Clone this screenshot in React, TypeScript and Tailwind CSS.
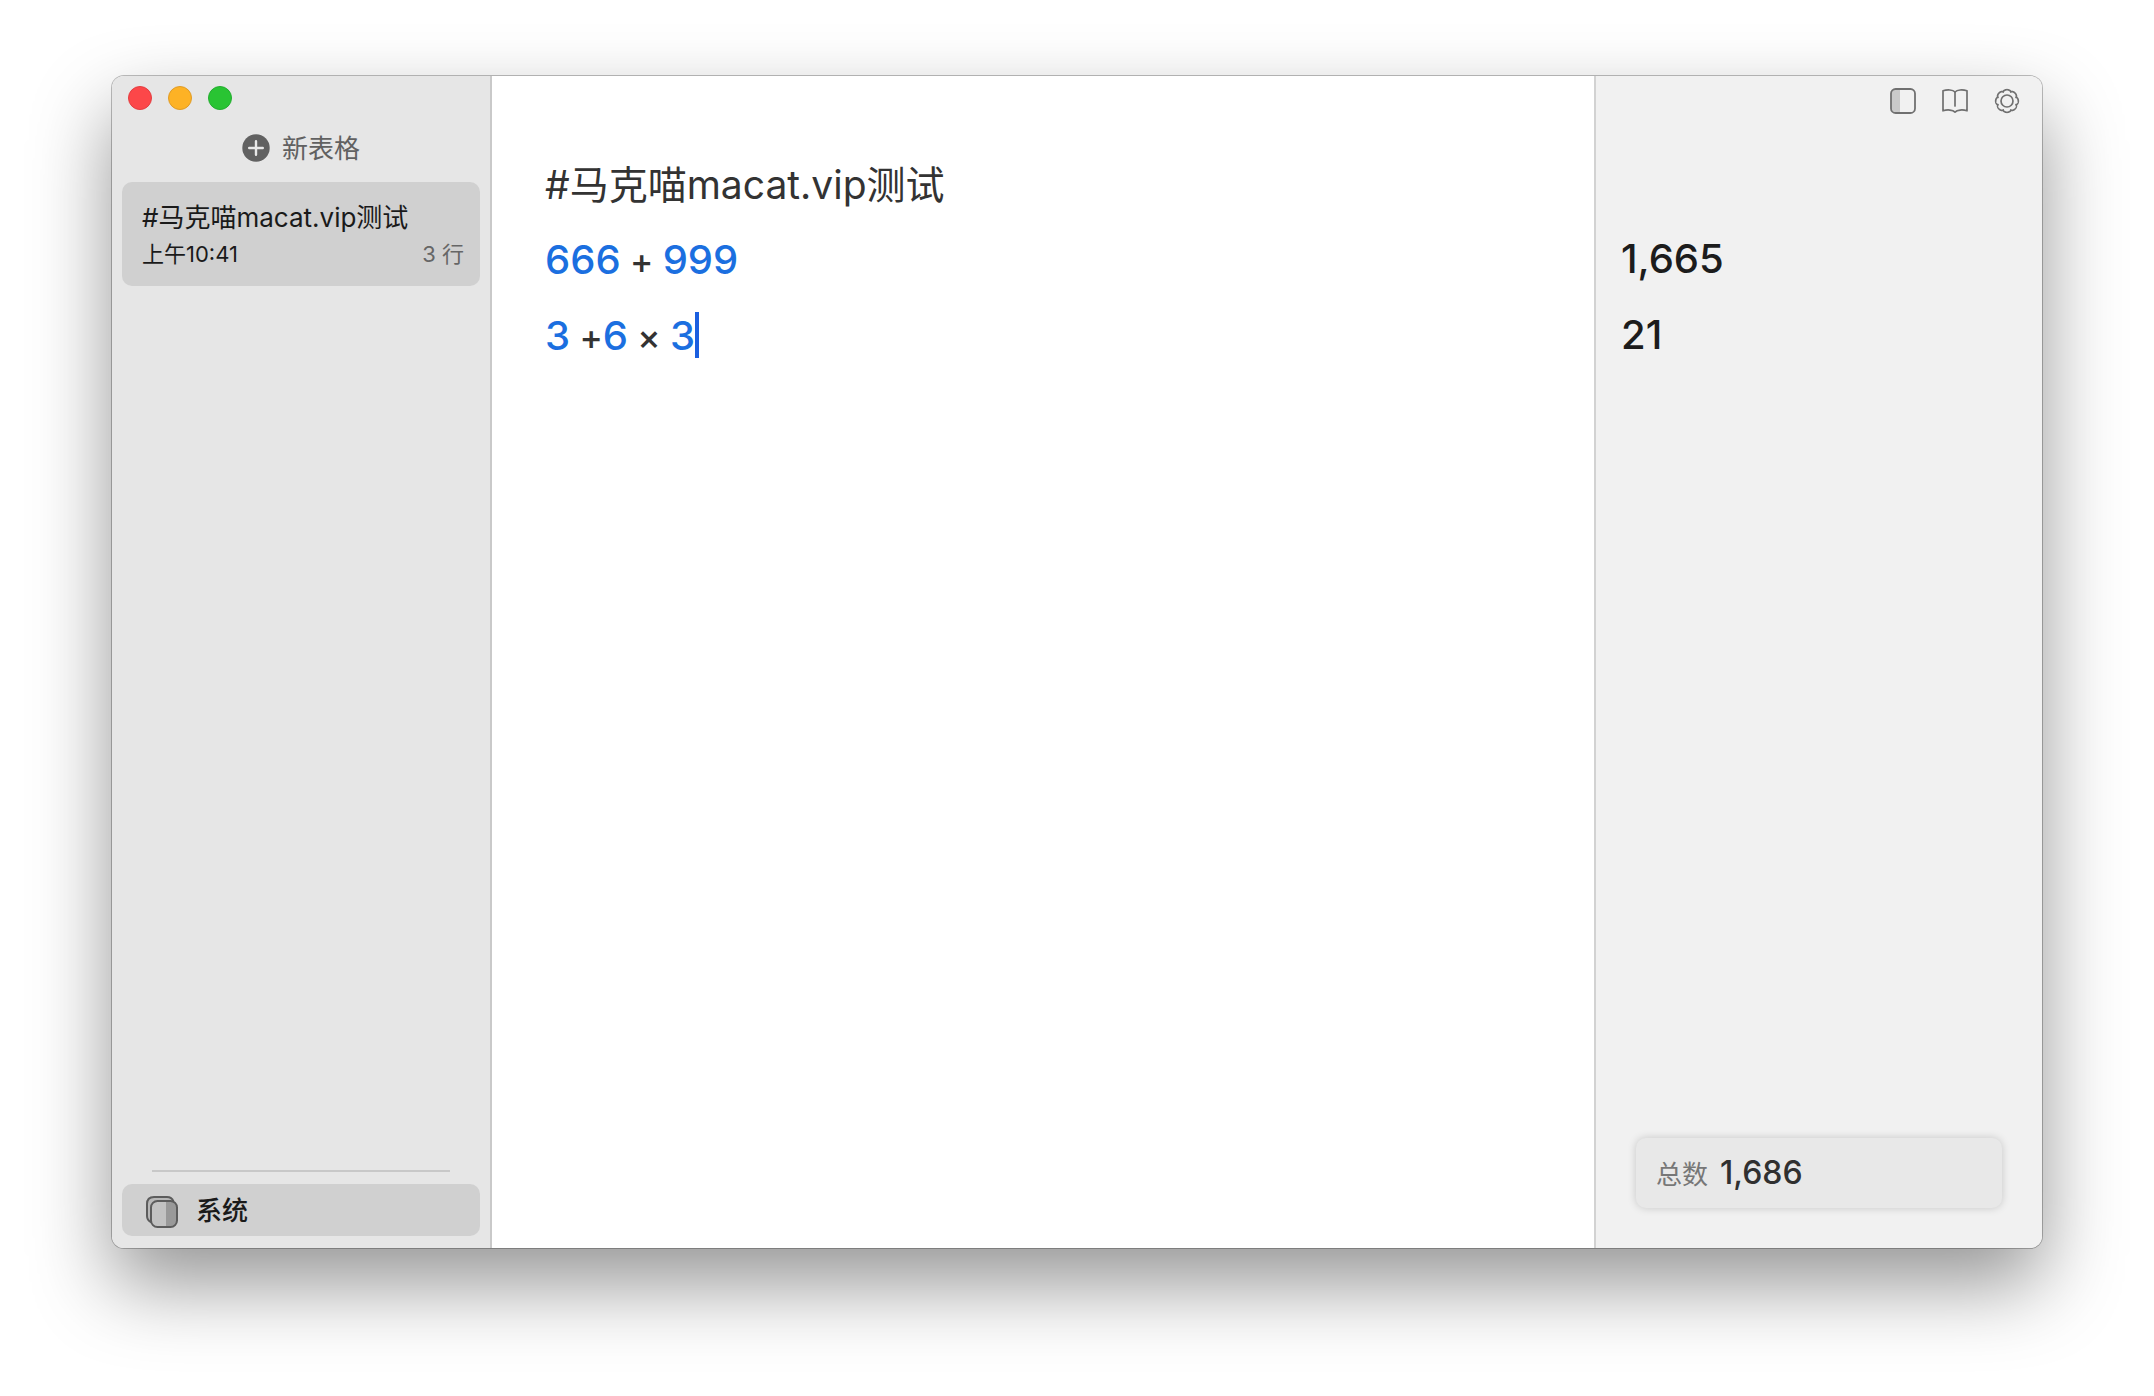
import type { ReactNode } from "react";

function PlusIcon() {
  return (
    <svg width="28" height="28" viewBox="0 0 28 28" aria-hidden="true">
      <circle cx="14" cy="14" r="13.7" fill="#616161" />
      <path d="M14 7.2v13.6M7.2 14h13.6" stroke="#e8e8e8" strokeWidth="2.4" strokeLinecap="round" />
    </svg>
  );
}

function StackIcon() {
  return (
    <svg width="32" height="32" viewBox="0 0 32 32" fill="none" aria-hidden="true">
      <path
        d="M5.4 26.4C2.4 25.2 1 23 1 20V8c0-4.4 2.6-7 7-7h13c3.4 0 5.4 1.6 6.4 4.4"
        fill="#b8b8b8"
        stroke="#5c5c5c"
        strokeWidth="2"
      />
      <rect x="5" y="5" width="26" height="26" rx="6.5" fill="#c2c2c2" />
      <path d="M20 5h4.5A6.5 6.5 0 0 1 31 11.5v13A6.5 6.5 0 0 1 24.5 31H20z" fill="#999999" />
      <rect x="5" y="5" width="26" height="26" rx="6.5" stroke="#5c5c5c" strokeWidth="2" />
    </svg>
  );
}

function SidebarIcon() {
  return (
    <svg width="26" height="26" viewBox="0 0 26 26" fill="none" aria-hidden="true">
      <path d="M10 1H5.4A4.4 4.4 0 0 0 1 5.4v15.2A4.4 4.4 0 0 0 5.4 25H10z" fill="#cacaca" />
      <rect x="1" y="1" width="24" height="24" rx="4.6" stroke="#707070" strokeWidth="1.8" />
    </svg>
  );
}

function BookIcon() {
  return (
    <svg width="26" height="26" viewBox="0 0 26 26" fill="none" stroke="#707070" strokeWidth="1.7" strokeLinejoin="round" aria-hidden="true">
      <path d="M13 4C10.8 1.8 5.6 1.2 1 2.8v20c4.6-1.5 9.8-.9 12 1.3 2.2-2.2 7.4-2.8 12-1.3v-20C20.4 1.2 15.2 1.8 13 4z" />
      <path d="M13 4v14" strokeLinecap="round" />
    </svg>
  );
}

const gearPath = (() => {
  const steps = 240;
  const points: string[] = [];
  for (let i = 0; i < steps; i++) {
    const a = (i / steps) * Math.PI * 2;
    const r = 9.7 + 1.6 * Math.sqrt(Math.abs(Math.cos(a * 4)));
    points.push(`${(13 + r * Math.sin(a)).toFixed(2)} ${(13 - r * Math.cos(a)).toFixed(2)}`);
  }
  return `M${points.join("L")}Z`;
})();

function GearIcon() {
  return (
    <svg width="26" height="26" viewBox="0 0 26 26" fill="none" stroke="#707070" strokeWidth="1.7" strokeLinejoin="round" aria-hidden="true">
      <path d={gearPath} />
      <circle cx="13" cy="13" r="6" />
    </svg>
  );
}

function Num({ children }: { children: ReactNode }) {
  return <span className="text-[40px] leading-none text-[#1b6fe0]">{children}</span>;
}

function Sidebar() {
  return (
    <aside className="flex w-[380px] shrink-0 flex-col border-r-2 border-[#c9c9c9] bg-[#e6e6e6] px-2.5 pb-3 pt-2.5">
      <div className="flex gap-4 px-1.5">
        <button aria-label="关闭" className="size-6 rounded-full border border-[#e33e41] bg-[#fc4749]" />
        <button aria-label="最小化" className="size-6 rounded-full border border-[#df9b27] bg-[#fdb225]" />
        <button aria-label="缩放" className="size-6 rounded-full border border-[#24ad30] bg-[#29c433]" />
      </div>
      <button className="mt-5 flex h-9 items-center justify-center gap-3 text-[26px] leading-9 text-[#616161]">
        <PlusIcon />
        <span className="pt-0.5">新表格</span>
      </button>
      <button className="mt-4 flex h-[104px] flex-col rounded-[10px] bg-[#d0d0d0] pl-5 pr-4 pt-[18px] text-left text-[#1a1a1a]">
        <span className="text-[26px] leading-9">#马克喵macat.vip测试</span>
        <span className="flex w-full justify-between text-[22px] leading-9">
          <span>上午10:41</span>
          <span className="text-[#666666]">3 行</span>
        </span>
      </button>
      <hr className="mx-[30px] mt-auto border-t-2 border-[#c8c8c8]" />
      <button className="mt-3 flex h-[52px] items-center gap-[18px] rounded-[10px] bg-[#d0d0d0] px-6 text-[26px] font-medium text-[#1a1a1a]">
        <span className="pt-1">
          <StackIcon />
        </span>
        系统
      </button>
    </aside>
  );
}

function Editor() {
  return (
    <main
      role="textbox"
      aria-multiline="true"
      aria-label="计算表格"
      className="min-w-0 flex-1 bg-white pl-[53px] pt-[71px] text-[#333333]"
    >
      <p className="text-[39px] leading-[76px]">#马克喵macat.vip测试</p>
      <p className="whitespace-pre text-[35px] font-medium leading-[76px]">
        <Num>666</Num> + <Num>999</Num>
      </p>
      <p className="whitespace-pre text-[35px] font-medium leading-[76px]">
        <Num>3</Num> +<Num>6</Num> × <Num>3</Num>
        <span className="inline-block h-[46px] w-1 bg-[#1a5fe0] align-[-8px]" />
      </p>
    </main>
  );
}

function Results() {
  return (
    <section className="flex w-[448px] shrink-0 flex-col border-l-2 border-[#d2d2d2] bg-[#f1f1f1]">
      <div className="flex justify-end gap-[26px] pr-[22px] pt-3">
        <button aria-label="边栏"><SidebarIcon /></button>
        <button aria-label="手册"><BookIcon /></button>
        <button aria-label="设置"><GearIcon /></button>
      </div>
      <output className="mt-[107px] block px-[25px] text-[40px] font-medium leading-[76px] text-[#1c1c1c]">
        <p>1,665</p>
        <p>21</p>
      </output>
      <div className="mx-10 mb-10 mt-auto flex h-[70px] items-center gap-3 rounded-[10px] bg-[#e8e8e8] px-5 shadow-[0_0_8px_rgba(0,0,0,0.18)]">
        <span className="pt-0.5 text-[26px] text-[#777777]">总数</span>
        <span className="text-[32px] font-medium text-[#303030]">1,686</span>
      </div>
    </section>
  );
}

export default function App() {
  return (
    <div className="flex min-h-screen bg-white px-28 pb-[148px] pt-[76px] font-['Inter','Noto_Sans_CJK_SC',sans-serif]">
      <div className="flex flex-1 overflow-hidden rounded-[12px] shadow-[0_0_0_1px_rgba(0,0,0,0.25),0_36px_80px_rgba(0,0,0,0.42)]">
        <Sidebar />
        <Editor />
        <Results />
      </div>
    </div>
  );
}
